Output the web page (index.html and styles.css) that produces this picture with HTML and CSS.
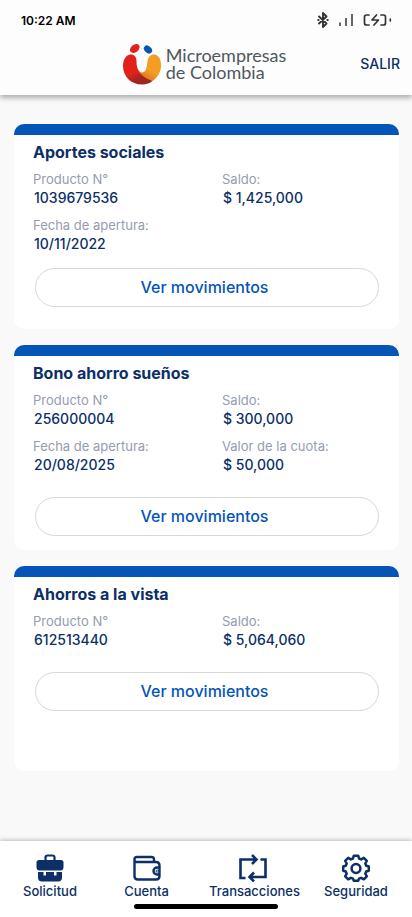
FILE: index.html
```html
<!DOCTYPE html>
<html lang="es">
<head>
<meta charset="utf-8">
<meta name="viewport" content="width=device-width, initial-scale=1">
<title>Microempresas de Colombia</title>
<link rel="stylesheet" href="styles.css">
</head>
<body>
<header class="top">
  <div class="status">
    <time class="clock">10:22 AM</time>
    <div class="status-icons">
      <svg width="12" height="18" viewBox="0 0 12 18" fill="none" stroke="#333" stroke-width="1.9" stroke-linejoin="round" stroke-linecap="round"><path d="M2 5.500l7.500 7L6 16V2l3.500 3.500L2 12.500"/><path d="M1.200 9h.4M10.400 9h.4"/></svg>
      <svg width="14" height="14" viewBox="0 0 14 14" stroke="#333" stroke-width="1.500"><path d="M1 9.500v3.500M7 5v8M13 1v12"/></svg>
      <svg width="29" height="14" viewBox="0 0 29 14" fill="none" stroke="#333" stroke-width="1.700" stroke-linecap="round" stroke-linejoin="round"><path d="M6 2H3.500Q1.500 2 1.500 4v6q0 2 2 2H6M18 2h2.500q2 0 2 2v6q0 2-2 2H18M13.500 2L9 7h6.500L11 12M27.300 6.200v1.600"/></svg>
    </div>
  </div>
  <div class="brand-row">
    <div class="brand">
      <svg class="brand-mark" width="40" height="42" viewBox="0 0 40 42">
        <defs>
          <linearGradient id="red" x1=".2" y1="0" x2=".7" y2="1"><stop offset=".55" stop-color="#e2211c"/><stop offset=".8" stop-color="#9d2522"/></linearGradient>
          <linearGradient id="orange" x1=".8" y1="0" x2=".3" y2="1"><stop offset=".6" stop-color="#f49d25"/><stop offset="1" stop-color="#dd6a1d"/></linearGradient>
        </defs>
        <path d="M8 11.500C3.500 12 1 17.500 1 23c0 10.500 8 18.500 19 18.500 4.500 0 8-1.200 10.500-3.500l-8-6c-7-3-8-8-8-14C14.500 13.500 12 11 8 11.500z" fill="url(#red)"/>
        <path d="M32 11.500c5 0 7 5 7 11 0 6.500-3.500 12-8.500 15.500C25 36.500 18.500 32 15.500 27c3 3.500 7 3 8.500-.5 2-4.500 0-15 8-15z" fill="url(#orange)"/>
        <ellipse cx="12.800" cy="5.500" rx="5.300" ry="3.800" transform="rotate(-38 12.800 5.500)" fill="#e2211c"/>
        <ellipse cx="26" cy="6.500" rx="4.600" ry="3.300" transform="rotate(42 26 6.500)" fill="#0455b7"/>
      </svg>
      <div class="brand-name"><div>Microempresas</div><div>de Colombia</div></div>
    </div>
    <a class="exit" href="#salir">SALIR</a>
  </div>
</header>

<main class="accounts">
  <article class="card">
    <h2>Aportes sociales</h2>
    <dl>
      <div><dt>Producto N°</dt><dd>1039679536</dd></div>
      <div><dt>Saldo:</dt><dd>$ 1,425,000</dd></div>
      <div><dt>Fecha de apertura:</dt><dd>10/11/2022</dd></div>
    </dl>
    <button type="button" class="tight">Ver movimientos</button>
  </article>
  <article class="card">
    <h2>Bono ahorro sueños</h2>
    <dl>
      <div><dt>Producto N°</dt><dd>256000004</dd></div>
      <div><dt>Saldo:</dt><dd>$ 300,000</dd></div>
      <div><dt>Fecha de apertura:</dt><dd>20/08/2025</dd></div>
      <div><dt>Valor de la cuota:</dt><dd>$ 50,000</dd></div>
    </dl>
    <button type="button">Ver movimientos</button>
  </article>
  <article class="card">
    <h2>Ahorros a la vista</h2>
    <dl>
      <div><dt>Producto N°</dt><dd>612513440</dd></div>
      <div><dt>Saldo:</dt><dd>$ 5,064,060</dd></div>
    </dl>
    <button type="button">Ver movimientos</button>
  </article>
</main>

<footer class="bottom">
  <nav class="tabs">
    <a href="#solicitud">
      <svg width="28" height="28" viewBox="0 0 28 28" fill="#0b2f66"><path d="M9.500 6V3.500q0-2 2-2h5q2 0 2 2V6" fill="none" stroke="#0b2f66" stroke-width="2.200"/><path d="M3 6h22q2.500 0 2.500 2.500V13q0 3.500-3 3.500H3.500q-3 0-3-3.500V8.500Q.5 6 3 6z"/><path d="M2 18h5.500v3.500H10V18h8v3.500h2.500V18H26v5.500q0 4-4 4H6q-4 0-4-4z"/></svg>
      <span>Solicitud</span>
    </a>
    <a href="#cuenta">
      <svg width="28" height="28" viewBox="0 0 28 28" fill="none" stroke="#0b2f66" stroke-width="2.400" stroke-linejoin="round" stroke-linecap="round"><path d="M21 8V5.500Q21 3 18.500 3H4Q1.500 3 1.500 5.500V22q0 3.500 3.500 3.500h18q3.500 0 3.500-3.500V11.500Q26.500 8 23 8H4Q1.500 8 1.500 5.500M26 13.500h-2a3.500 3.500 0 0 0 0 7h2"/><circle cx="24.200" cy="17" r=".4"/></svg>
      <span>Cuenta</span>
    </a>
    <a href="#transacciones">
      <svg width="32" height="28" viewBox="0 0 32 28" fill="none" stroke="#0b2f66" stroke-width="2.600"><path d="M6.500 24H1.500V5.500H17M13 1l4.500 4.500L13 10M21.500 5.500h5V23H11M15 18.500L10.500 23l4.500 4.500"/></svg>
      <span>Transacciones</span>
    </a>
    <a href="#seguridad">
      <svg width="28" height="28" viewBox="0 0 28 28" fill="none" stroke="#0b2f66" stroke-width="2.500" stroke-linejoin="round"><path d="M11.800 1.700h4.400l.8 2.800 2.200.9 2.600-1.500 3 3-1.500 2.600.9 2.200 2.600.8v4.200l-2.600.8-.9 2.200 1.500 2.600-3 3-2.600-1.500-2.200.9-.8 2.100h-4.400l-.8-2.100-2.200-.9-2.600 1.500-3-3 1.500-2.600-.9-2.200-2.600-.8v-4.200l2.600-.8.900-2.200-1.500-2.600 3-3 2.600 1.500 2.200-.9z"/><circle cx="14" cy="14.500" r="4.400"/></svg>
      <span>Seguridad</span>
    </a>
  </nav>
  <div class="home-bar"></div>
</footer>
</body>
</html>
```
FILE: styles.css
```css
* {
  box-sizing: border-box;
  margin: 0;
}

body {
  display: flex;
  flex-direction: column;
  min-height: 100vh;
  background: #f9f9f9;
  color: #0b2f66;
  font-family: Inter, sans-serif;
}

a {
  color: inherit;
  text-decoration: none;
}

.top {
  padding-bottom: 8px;
  background: #fdfdfd;
  box-shadow: 0 3px 5px rgba(0, 0, 0, 0.3);
}

.status {
  display: flex;
  align-items: center;
  justify-content: space-between;
  height: 40px;
  padding: 0 20px 0 21px;
}

.clock {
  color: #000;
  font-size: 12px;
  font-weight: 600;
}

.status-icons {
  display: flex;
  align-items: center;
  gap: 10px;
}

.brand-row {
  display: grid;
  grid-template-columns: 1fr auto 1fr;
  align-items: center;
  height: 47px;
  padding: 0 12px;
}

.brand {
  grid-column: 2;
  display: flex;
  align-items: center;
  gap: 4px;
  padding-right: 4px;
}

.brand-name {
  color: #50575e;
  font-family: Lato, sans-serif;
  font-size: 18px;
  line-height: 17px;
}

.exit {
  justify-self: end;
  font-size: 14px;
  font-weight: 500;
}

.accounts {
  display: flex;
  flex: 1;
  flex-direction: column;
  gap: 16px;
  padding: 29px 13px 32px 14px;
}

.card {
  min-height: 205px;
  padding: 6px 19px 12px;
  border-top: 11px solid #0455b7;
  border-radius: 10px;
  background: #fff;
}

.card h2 {
  font-size: 16px;
  font-weight: 700;
  line-height: 22px;
}

.card dl {
  display: grid;
  grid-template-columns: 189fr 158fr;
  gap: 8px 0;
  margin-top: 7px;
}

.card dt {
  color: #959cb0;
  font-size: 13px;
  line-height: 18px;
}

.card dd {
  padding-left: 1px;
  font-size: 14px;
  font-weight: 500;
  line-height: 20px;
}

.card button {
  display: block;
  width: calc(100% - 3px);
  height: 39px;
  margin: 22px auto 0;
  padding: 0 8px 2px 4px;
  border: 1px solid #d8d8d8;
  border-radius: 20px;
  background: #fff;
  color: #0455b7;
  font: 500 16px Inter, sans-serif;
}

.card .tight {
  margin-top: 14px;
}

.bottom {
  padding: 13px 0 8px;
  background: #fff;
  box-shadow: 0 -1px 4px rgba(0, 0, 0, 0.25);
}

.tabs {
  display: grid;
  grid-template-columns: 100fr 93fr 123fr 80fr;
  padding-right: 16px;
}

.tabs a {
  display: flex;
  flex-direction: column;
  align-items: center;
  font-size: 13px;
  font-weight: 500;
  line-height: 18px;
}

.home-bar {
  width: 35%;
  height: 5px;
  margin: 4px auto 0;
  border-radius: 3px;
  background: #000;
}
```
